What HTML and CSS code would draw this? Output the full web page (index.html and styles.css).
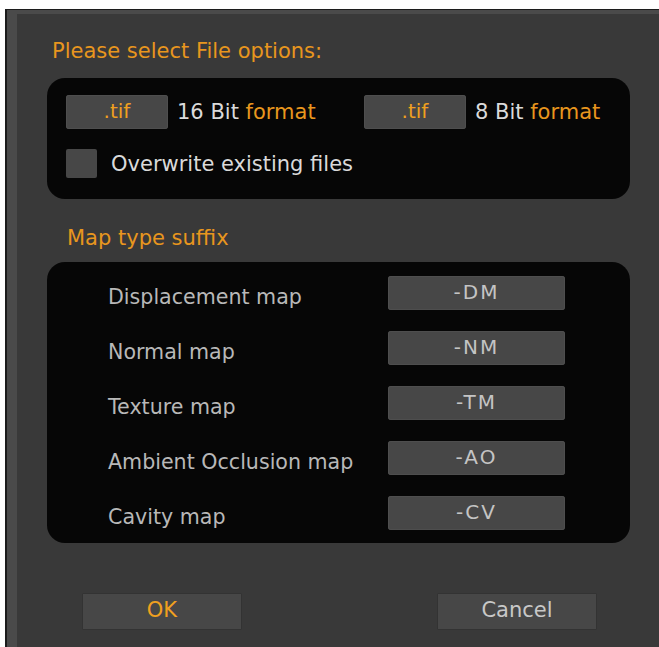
FILE: index.html
```html
<!DOCTYPE html>
<html lang="en">
<head>
<meta charset="utf-8">
<title>File options</title>
<link rel="stylesheet" href="styles.css">
</head>
<body>
<div class="window">
  <div class="content">
    <h1 class="title">Please select File options:</h1>

    <section class="panel panel-file">
      <div class="format-row">
        <div class="format">
          <span class="field field-ext">.tif</span>
          <span class="format-label">16 Bit <em>format</em></span>
        </div>
        <div class="format">
          <span class="field field-ext">.tif</span>
          <span class="format-label">8 Bit <em>format</em></span>
        </div>
      </div>
      <label class="check-row">
        <span class="checkbox"></span>
        <span class="check-label">Overwrite existing files</span>
      </label>
    </section>

    <h2 class="subtitle">Map type suffix</h2>

    <section class="panel panel-suffix">
      <span class="map-label">Displacement map</span><span class="field field-suffix">-DM</span>
      <span class="map-label">Normal map</span><span class="field field-suffix">-NM</span>
      <span class="map-label">Texture map</span><span class="field field-suffix">-TM</span>
      <span class="map-label">Ambient Occlusion map</span><span class="field field-suffix">-AO</span>
      <span class="map-label">Cavity map</span><span class="field field-suffix">-CV</span>
    </section>

    <div class="actions">
      <button class="btn btn-ok" type="button">OK</button>
      <button class="btn btn-cancel" type="button">Cancel</button>
    </div>
  </div>
</div>
</body>
</html>
```

FILE: styles.css
```css
html {
  overflow: hidden;
}

body {
  margin: 0;
  background: #ffffff;
  font-family: "DejaVu Sans", Verdana, sans-serif;
  font-size: 21px;
  line-height: 24px;
}

/* dialog frame: dark outline, lighter bevel on the left and top */
.window {
  margin: 9px 0 0 5px;
  border-left: 2px solid #1c1c1c;
  border-top: 1px solid #1c1c1c;
  background: #4a4a4a;
  padding: 4px 0 0 10px;
  height: 633px;
}

.content {
  background: #393939;
  height: 100%;
  padding: 25px 0 0 0;
  box-sizing: border-box;
}

.title,
.subtitle {
  margin: 0;
  font-weight: normal;
  font-size: 21px;
  line-height: 24px;
  color: #e8961e;
}

.title {
  padding-left: 35px;
}

.subtitle {
  padding-left: 50px;
  margin-top: 27px;
}

.panel {
  background: #060606;
  border-radius: 18px;
  margin-left: 30px;
  width: 583px;
  box-sizing: border-box;
}

/* file format block */
.panel-file {
  margin-top: 15px;
  padding: 17px 0 21px 19px;
}

.format-row {
  display: grid;
  grid-template-columns: 298px auto;
}

.format {
  display: flex;
  align-items: center;
  gap: 9px;
}

.field {
  background: #474747;
  border-radius: 3px;
  box-shadow: inset 0 0 0 1px #4e4e4e;
  display: flex;
  align-items: center;
  justify-content: center;
  height: 34px;
}

.field-ext {
  width: 102px;
  color: #f0a020;
  font-size: 20px;
  padding-bottom: 3px;
  box-sizing: border-box;
}

.format-label {
  color: #dadada;
}

.format-label em {
  font-style: normal;
  color: #e8961e;
}

.check-row {
  display: flex;
  align-items: center;
  gap: 14px;
  margin-top: 20px;
}

.checkbox {
  width: 31px;
  height: 29px;
  background: #474747;
  border-radius: 2px;
}

.check-label {
  color: #dadada;
}

/* suffix table */
.panel-suffix {
  margin-top: 12px;
  padding: 14px 0 13px 61px;
  display: grid;
  grid-template-columns: 280px 177px;
  row-gap: 21px;
  align-items: center;
}

.map-label {
  color: #b8b8b8;
  font-size: 20.6px;
  padding-top: 7px;
}

.field-suffix {
  color: #c4c4c4;
  font-size: 20px;
  letter-spacing: 2px;
  padding-bottom: 2px;
  box-sizing: border-box;
}

/* dialog buttons */
.actions {
  display: flex;
  gap: 195px;
  margin: 50px 0 0 65px;
}

.btn {
  width: 160px;
  height: 37px;
  border: 1px solid #333333;
  background: #474747;
  font-family: "DejaVu Sans", Verdana, sans-serif;
  font-size: 21px;
  padding: 0 0 3px;
  border-radius: 1px;
}

.btn-ok {
  color: #f0a020;
}

.btn-cancel {
  color: #c8c8c8;
}
```
